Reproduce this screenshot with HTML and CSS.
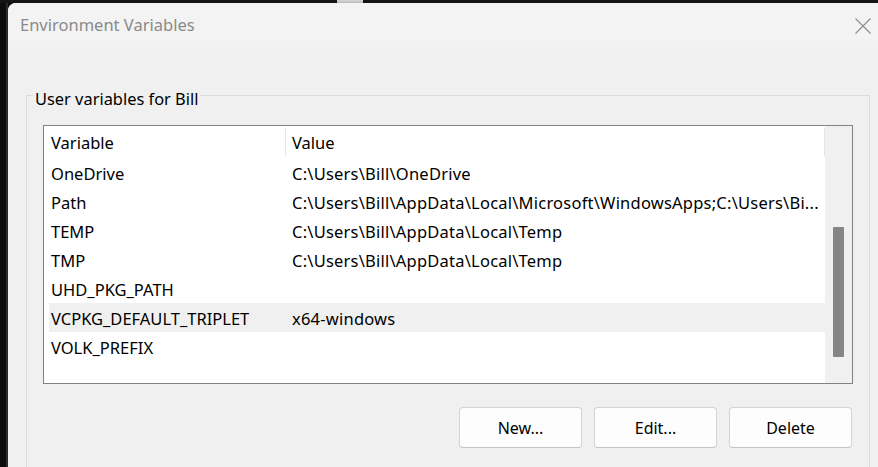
FILE: index.html
```html
<!DOCTYPE html>
<html>
<head>
<meta charset="utf-8">
<title>Environment Variables</title>
<link rel="stylesheet" href="styles.css">
</head>
<body>
<div class="screen">
  <div class="topstrip"><span class="peek"></span></div>
  <div class="main">
    <div class="leftedge"></div>
    <div class="window">
      <div class="titlebar">
        <span class="title">Environment Variables</span>
        <svg class="close" width="16" height="16" viewBox="0 0 16 16" aria-hidden="true">
          <path d="M0.5 0.5 L15.5 15.5 M15.5 0.5 L0.5 15.5" stroke="#8c8c8c" stroke-width="1.1" fill="none"/>
        </svg>
      </div>
      <div class="content">
        <fieldset class="group">
          <legend>User variables for Bill</legend>
          <div class="listbox">
            <div class="list">
              <div class="header">
                <span class="hcell hcol1">Variable</span>
                <span class="hcell hcol2">Value</span>
              </div>
              <div class="row"><span class="c1">OneDrive</span><span class="c2">C:\Users\Bill\OneDrive</span></div>
              <div class="row"><span class="c1">Path</span><span class="c2">C:\Users\Bill\AppData\Local\Microsoft\WindowsApps;C:\Users\Bi...</span></div>
              <div class="row"><span class="c1">TEMP</span><span class="c2">C:\Users\Bill\AppData\Local\Temp</span></div>
              <div class="row"><span class="c1">TMP</span><span class="c2">C:\Users\Bill\AppData\Local\Temp</span></div>
              <div class="row"><span class="c1">UHD_PKG_PATH</span><span class="c2"></span></div>
              <div class="row selected"><span class="c1">VCPKG_DEFAULT_TRIPLET</span><span class="c2">x64-windows</span></div>
              <div class="row"><span class="c1">VOLK_PREFIX</span><span class="c2"></span></div>
            </div>
            <div class="scrollbar"><div class="thumb"></div></div>
          </div>
          <div class="buttons">
            <button class="btn">New...</button>
            <button class="btn">Edit...</button>
            <button class="btn">Delete</button>
          </div>
        </fieldset>
      </div>
    </div>
  </div>
</div>
</body>
</html>
```

FILE: styles.css
```css
* { box-sizing: border-box; }
html, body { margin: 0; padding: 0; background: #0c0c0c; }
.screen {
  width: 878px;
  height: 467px;
  overflow: hidden;
  background: #0c0c0c;
  font-family: "Noto Sans", "Open Sans", sans-serif;
  color: #000;
}
.topstrip {
  height: 3px;
  background: #141414;
  display: flex;
}
.peek {
  margin-left: 337px;
  width: 26px;
  height: 3px;
  background: linear-gradient(#d8d8d8, #b8b8b8);
}
.main {
  display: flex;
  height: 464px;
}
.leftedge {
  width: 8px;
  flex: none;
  background: linear-gradient(to right, #0c0c0c 6px, #2b2b2b 6px);
}
.window {
  flex: 1;
  background: #f0f0f0;
  border-top-left-radius: 8px;
  overflow: hidden;
}
.titlebar {
  height: 44px;
  background: #f3f3f3;
  display: flex;
  align-items: center;
  justify-content: space-between;
  padding: 0 7px 0 12px;
}
.title {
  font-size: 16.5px;
  color: #8a8a8a;
  margin-top: -1px;
}
.close { display: block; margin-top: 1px; }
.content {
  padding: 34px 0 0 18px;
}
.group {
  margin: 0;
  width: 844px;
  border: 1px solid #dcdcdc;
  padding: 16px 16px 30px 16px;
  min-width: 0;
}
.group legend {
  font-size: 16.4px;
  line-height: 20px;
  padding: 8px 2px 0 2px;
  margin-left: -10px;
  color: #000;
}
.listbox {
  height: 259px;
  border: 1px solid #828282;
  display: flex;
  background: #fff;
}
.list {
  flex: 1;
  background: #fff;
  font-size: 16.5px;
}
.header {
  height: 32px;
  display: flex;
}
.hcell {
  margin: 2px 0;
  border-right: 1px solid #e5e5e5;
  display: flex;
  align-items: center;
  white-space: nowrap;
  padding-top: 1px;
}
.hcol1 { width: 242px; padding-left: 7px; }
.hcol2 { width: 539px; padding-left: 6px; }
.row {
  height: 29px;
  margin-left: 5px;
  display: flex;
  align-items: center;
  white-space: nowrap;
  padding-top: 2px;
}
.row.selected { background: #f0f0f0; }
.c1 { width: 237px; padding-left: 2px; flex: none; }
.c2 { flex: 1; padding-left: 6px; overflow: hidden; letter-spacing: 0.22px; }
.scrollbar {
  width: 27px;
  flex: none;
  background: #f0f0f0;
  padding: 101px 8px 0 8px;
}
.thumb {
  height: 130px;
  background: #858585;
  border-radius: 1px;
}
.buttons {
  display: flex;
  justify-content: flex-end;
  gap: 12px;
  margin: 23px 1px 0 0;
}
.btn {
  width: 123px;
  height: 41px;
  background: #fdfdfd;
  border: 1px solid #d3d3d3;
  border-bottom-color: #c5c5c5;
  border-radius: 4px;
  font-family: "Noto Sans", "Open Sans", sans-serif;
  font-size: 16px;
  color: #000;
  padding: 0;
}
```
